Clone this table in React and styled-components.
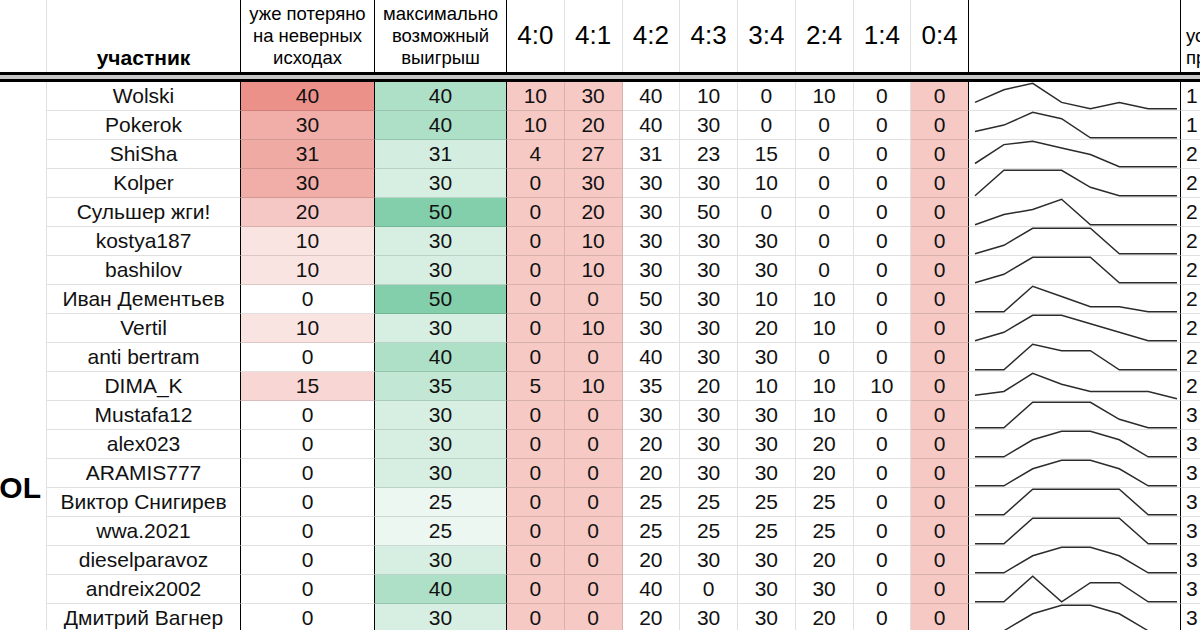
import styled, { createGlobalStyle, css } from 'styled-components';

const GlobalStyle = createGlobalStyle`
	html, body {
		margin: 0;
		padding: 0;
		background: #fff;
		overflow: hidden;
	}
	body {
		font-family: 'Liberation Sans', Arial, sans-serif;
		color: #111;
	}
`;

const GRID = 'rgba(0, 0, 0, 0.12)';

const SCORES = ['4:0', '4:1', '4:2', '4:3', '3:4', '2:4', '1:4', '0:4'];
// колонки с розовой заливкой
const PINK_SCORES = [0, 1, 7];

const rows = [
	['Wolski', 40, 40, [10, 30, 40, 10, 0, 10, 0, 0], 1],
	['Pokerok', 30, 40, [10, 20, 40, 30, 0, 0, 0, 0], 1],
	['ShiSha', 31, 31, [4, 27, 31, 23, 15, 0, 0, 0], 2],
	['Kolper', 30, 30, [0, 30, 30, 30, 10, 0, 0, 0], 2],
	['Сульшер жги!', 20, 50, [0, 20, 30, 50, 0, 0, 0, 0], 2],
	['kostya187', 10, 30, [0, 10, 30, 30, 30, 0, 0, 0], 2],
	['bashilov', 10, 30, [0, 10, 30, 30, 30, 0, 0, 0], 2],
	['Иван Дементьев', 0, 50, [0, 0, 50, 30, 10, 10, 0, 0], 2],
	['Vertil', 10, 30, [0, 10, 30, 30, 20, 10, 0, 0], 2],
	['anti bertram', 0, 40, [0, 0, 40, 30, 30, 0, 0, 0], 2],
	['DIMA_K', 15, 35, [5, 10, 35, 20, 10, 10, 10, 0], 2],
	['Mustafa12', 0, 30, [0, 0, 30, 30, 30, 10, 0, 0], 3],
	['alex023', 0, 30, [0, 0, 20, 30, 30, 20, 0, 0], 3],
	['ARAMIS777', 0, 30, [0, 0, 20, 30, 30, 20, 0, 0], 3],
	['Виктор Снигирев', 0, 25, [0, 0, 25, 25, 25, 25, 0, 0], 3],
	['wwa.2021', 0, 25, [0, 0, 25, 25, 25, 25, 0, 0], 3],
	['dieselparavoz', 0, 30, [0, 0, 20, 30, 30, 20, 0, 0], 3],
	['andreix2002', 0, 40, [0, 0, 40, 0, 30, 30, 0, 0], 3],
	['Дмитрий Вагнер', 0, 30, [0, 0, 20, 30, 30, 20, 0, 0], 3],
];

const mix = (from, to, t) => {
	const k = Math.max(0, Math.min(1, t));
	const c = from.map((v, i) => Math.round(v + (to[i] - v) * k));
	return `rgb(${c.join(', ')})`;
};

const lossColor = (v) => mix([255, 255, 255], [236, 145, 138], v / 40);
const maxColor = (v) => mix([236, 247, 241], [132, 207, 171], (v - 25) / 25);

const Sheet = styled.div`
	display: grid;
	grid-template-columns: 47px 194px 134px 132px repeat(8, 57.75px) 212px 140px;
	grid-template-rows: 72px 10px repeat(19, 29px);
	width: max-content;
	font-size: 21px;
`;

const edge = css`
	border-right: 1px solid ${(p) => (p.$black ? '#000' : GRID)};
`;

const HeadCell = styled.div`
	${edge};
	display: flex;
	flex-direction: column;
	justify-content: ${(p) => (p.$middle ? 'center' : 'flex-end')};
	align-items: ${(p) => (p.$left ? 'flex-start' : 'center')};
	padding: ${(p) => (p.$left ? '0 0 3px 5px' : '0 0 3px')};
	font-size: ${(p) => p.$size || 18.5}px;
	font-weight: ${(p) => (p.$bold ? 700 : 400)};
	line-height: 22px;
	white-space: nowrap;
	overflow: hidden;
	color: #000;
`;

const Divider = styled.div`
	grid-column: 1 / -1;
	border-top: 3px solid #000;
	border-bottom: 3px solid #000;
	background: #c8c8c8;
`;

const SideCell = styled.div`
	grid-column: 1;
	grid-row: ${(p) => p.$start} / span ${(p) => p.$span};
	border-right: 1px solid ${GRID};
	display: flex;
	align-items: center;
	justify-content: flex-end;
	padding-right: 5px;
	overflow: hidden;
	font-size: 30px;
	font-weight: 700;
	color: #000;
`;

const Cell = styled.div`
	${edge};
	border-bottom: 1px solid ${GRID};
	background: ${(p) => p.$bg || '#fff'};
	display: flex;
	align-items: center;
	justify-content: ${(p) => (p.$left ? 'flex-start' : 'center')};
	padding-left: ${(p) => (p.$left ? '5px' : '0')};
	line-height: 28px;
	white-space: nowrap;
	overflow: hidden;
	color: #111;
`;

const SparkCell = styled.div`
	${edge};
	border-bottom: 1px solid ${GRID};
	display: flex;
`;

const Spark = ({ values }) => {
	const max = Math.max(...values) || 1;
	const pts = values
		.map((v, i) => `${(6 + i * 28.86).toFixed(1)},${(26.8 - (v / max) * 25.5).toFixed(1)}`)
		.join(' ');
	return (
		<svg width="211" height="28" viewBox="0 0 211 28">
			<polyline points={pts} fill="none" stroke="#2b2b2b" strokeWidth="1.5" />
		</svg>
	);
};

const Row = ({ name, loss, best, scores, rank }) => (
	<>
		<Cell $black>{name}</Cell>
		<Cell $black $bg={lossColor(loss)}>
			{loss}
		</Cell>
		<Cell $black $bg={maxColor(best)}>
			{best}
		</Cell>
		{scores.map((v, i) => (
			<Cell key={i} $black={i === 7} $bg={PINK_SCORES.includes(i) ? '#f6c9c5' : undefined}>
				{v}
			</Cell>
		))}
		<SparkCell $black>
			<Spark values={scores} />
		</SparkCell>
		<Cell $left>{rank}</Cell>
	</>
);

const App = () => (
	<>
		<GlobalStyle />
		<Sheet>
			<HeadCell />
			<HeadCell $black $bold $size={21}>
				участник
			</HeadCell>
			<HeadCell $black>
				<span>уже потеряно</span>
				<span>на неверных</span>
				<span>исходах</span>
			</HeadCell>
			<HeadCell $black>
				<span>максимально</span>
				<span>возможный</span>
				<span>выигрыш</span>
			</HeadCell>
			{SCORES.map((s, i) => (
				<HeadCell key={s} $middle $size={26} $black={i === 7}>
					{s}
				</HeadCell>
			))}
			<HeadCell $black />
			<HeadCell $left>
				<span>успешных</span>
				<span>прогнозов</span>
			</HeadCell>

			<Divider />

			<SideCell $start={3} $span={9} />
			<SideCell $start={12} $span={10}>
				OL
			</SideCell>

			{rows.map(([name, loss, best, scores, rank]) => (
				<Row key={name} name={name} loss={loss} best={best} scores={scores} rank={rank} />
			))}
		</Sheet>
	</>
);

export default App;
